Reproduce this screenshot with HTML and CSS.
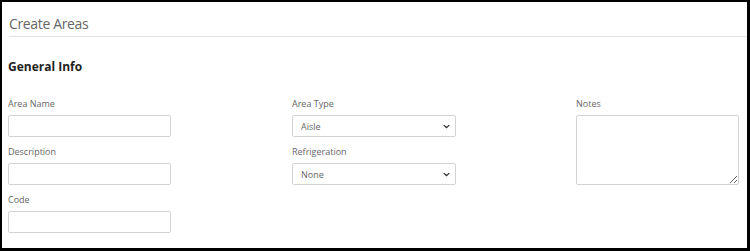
FILE: index.html
```html
<!DOCTYPE html>
<html lang="en">
<head>
    <meta charset="UTF-8">
    <title>Create Areas</title>
    <link rel="stylesheet" href="styles.css">
</head>
<body>
    <div class="frame">
        <div class="page-header">
            <h1>Create Areas</h1>
        </div>

        <!-- General info form -->
        <div class="section">
            <h2>General Info</h2>
            <div class="form-grid">
                <div class="col">
                    <div class="field">
                        <label for="areaName">Area Name</label>
                        <input type="text" id="areaName">
                    </div>
                    <div class="field">
                        <label for="description">Description</label>
                        <input type="text" id="description">
                    </div>
                    <div class="field">
                        <label for="code">Code</label>
                        <input type="text" id="code">
                    </div>
                </div>
                <div class="col">
                    <div class="field">
                        <label for="areaType">Area Type</label>
                        <div class="select-wrap">
                            <select id="areaType">
                                <option>Aisle</option>
                            </select>
                            <svg class="chevron" viewBox="0 0 10 6"><path d="M1 1l4 3.5L9 1" /></svg>
                        </div>
                    </div>
                    <div class="field">
                        <label for="refrigeration">Refrigeration</label>
                        <div class="select-wrap">
                            <select id="refrigeration">
                                <option>None</option>
                            </select>
                            <svg class="chevron" viewBox="0 0 10 6"><path d="M1 1l4 3.5L9 1" /></svg>
                        </div>
                    </div>
                </div>
                <div class="col">
                    <div class="field">
                        <label for="notes">Notes</label>
                        <textarea id="notes"></textarea>
                    </div>
                </div>
            </div>
        </div>
    </div>
</body>
</html>
```

FILE: styles.css
```css
* {
    margin: 0;
    padding: 0;
    box-sizing: border-box;
    font-family: 'Open Sans', sans-serif;
}

html, body {
    height: 100%;
    background: #000;
    overflow: hidden;
}

.frame {
    margin: 2px 3px 3px 2px;
    height: calc(100% - 5px);
    background: #fff;
    overflow: hidden;
}

.page-header {
    margin-left: 7px;
    padding-top: 12px;
    height: 35px;
    border-bottom: 1px solid #e3e3e3;
}

h1 {
    font-size: 14px;
    font-weight: 400;
    letter-spacing: -0.35px;
    color: #666;
    line-height: 20px;
}

.section {
    padding: 0 6px;
}

h2 {
    margin-top: 21px;
    font-size: 12px;
    font-weight: 700;
    color: #222;
    line-height: 18px;
}

.form-grid {
    display: grid;
    grid-template-columns: 284px 284px 200px;
    margin-top: 22px;
}

.field {
    display: flex;
    flex-direction: column;
    margin-bottom: 9px;
}

label {
    font-size: 9px;
    color: #666;
    line-height: 12px;
    margin-bottom: 5px;
}

input, select, textarea {
    display: block;
    width: 163px;
    height: 22px;
    border: 1px solid #d2d2d2;
    border-radius: 2px;
    background: #fff;
    font-size: 9px;
    color: #666;
    outline: none;
}

.select-wrap {
    position: relative;
    width: 164px;
}

select {
    width: 164px;
    appearance: none;
    padding-left: 8px;
}

.chevron {
    position: absolute;
    right: 6px;
    top: 9px;
    width: 7px;
    height: 5px;
    fill: none;
    stroke: #333;
    stroke-width: 1.8;
    pointer-events: none;
}

textarea {
    height: 70px;
    resize: vertical;
}
```
